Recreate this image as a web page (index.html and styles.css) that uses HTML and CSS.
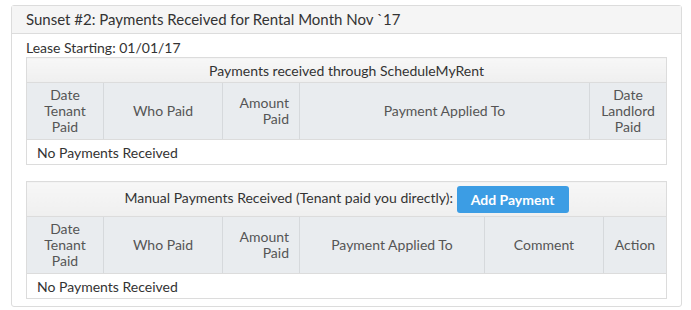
FILE: index.html
```html
<!DOCTYPE html>
<html lang="en">
<head>
    <meta charset="UTF-8">
    <title>Payments Received</title>
    <link rel="stylesheet" href="styles.css">
</head>
<body>
    <div class="panel">
        <div class="panel-heading">Sunset #2: Payments Received for Rental Month Nov `17</div>
        <div class="panel-body">
            <div class="lease">Lease Starting: 01/01/17</div>

            <table class="pay-table">
                <colgroup>
                    <col class="c-date"><col class="c-who"><col class="c-amt"><col><col class="c-date">
                </colgroup>
                <tr class="title-row">
                    <th colspan="5">Payments received through ScheduleMyRent</th>
                </tr>
                <tr class="head-row">
                    <th>Date<br>Tenant<br>Paid</th>
                    <th>Who Paid</th>
                    <th class="right">Amount<br>Paid</th>
                    <th>Payment Applied To</th>
                    <th>Date<br>Landlord<br>Paid</th>
                </tr>
                <tr class="body-row">
                    <td colspan="5">No Payments Received</td>
                </tr>
            </table>

            <table class="pay-table manual">
                <colgroup>
                    <col class="c-date"><col class="c-who"><col class="c-amt"><col><col class="c-who"><col class="c-action">
                </colgroup>
                <tr class="title-row">
                    <th colspan="6">Manual Payments Received (Tenant paid you directly): <button class="btn-add">Add Payment</button></th>
                </tr>
                <tr class="head-row">
                    <th>Date<br>Tenant<br>Paid</th>
                    <th>Who Paid</th>
                    <th class="right">Amount<br>Paid</th>
                    <th>Payment Applied To</th>
                    <th>Comment</th>
                    <th>Action</th>
                </tr>
                <tr class="body-row">
                    <td colspan="6">No Payments Received</td>
                </tr>
            </table>
        </div>
    </div>
</body>
</html>
```

FILE: styles.css
```css
body {
    font-family: 'Lato', 'Liberation Sans', sans-serif;
    color: #333;
    margin: 0;
    background-color: #fff;
}
.panel {
    margin: 5px 9px 0 11px;
    border: 1px solid #dcdcdc;
    border-radius: 3px;
}
.panel-heading {
    background-color: #f5f5f5;
    border-bottom: 1px solid #dcdcdc;
    font-size: 15px;
    height: 27px;
    line-height: 27px;
    padding: 0 14px;
}
.panel-body {
    padding: 5px 14px 7px 14px;
}
.lease {
    font-size: 14px;
    line-height: 18px;
    height: 18px;
}
.pay-table {
    width: 100%;
    border-collapse: collapse;
    table-layout: fixed;
    font-size: 14px;
    border: 1px solid #dcdcdc;
}
.pay-table.manual {
    margin-top: 16px;
}
.c-date { width: 77px; }
.c-who { width: 119px; }
.c-amt { width: 77px; }
.c-action { width: 63px; }
.title-row th {
    background: linear-gradient(#f7f7f7, #efefef);
    font-weight: normal;
    color: #333;
    height: 24px;
    padding: 0;
    border-bottom: 1px solid #dcdcdc;
}
.manual .title-row th {
    height: 34px;
}
.head-row th {
    background-color: #e9ecef;
    color: #555;
    font-weight: normal;
    line-height: 16px;
    height: 56px;
    padding: 0 8px;
    border-right: 1px solid #d6d9dc;
    border-bottom: 1px solid #dcdcdc;
}
.head-row th:last-child {
    border-right: none;
}
.head-row th.right {
    text-align: right;
    padding-right: 10px;
}
.body-row td {
    height: 24px;
    padding: 0 10px;
}
.btn-add {
    font-family: 'Lato', 'Liberation Sans', sans-serif;
    font-size: 14px;
    font-weight: bold;
    color: #fff;
    background-color: #3c9de4;
    border: none;
    border-radius: 3px;
    width: 112px;
    height: 27px;
    margin-left: 0;
    vertical-align: middle;
    cursor: pointer;
}
```
